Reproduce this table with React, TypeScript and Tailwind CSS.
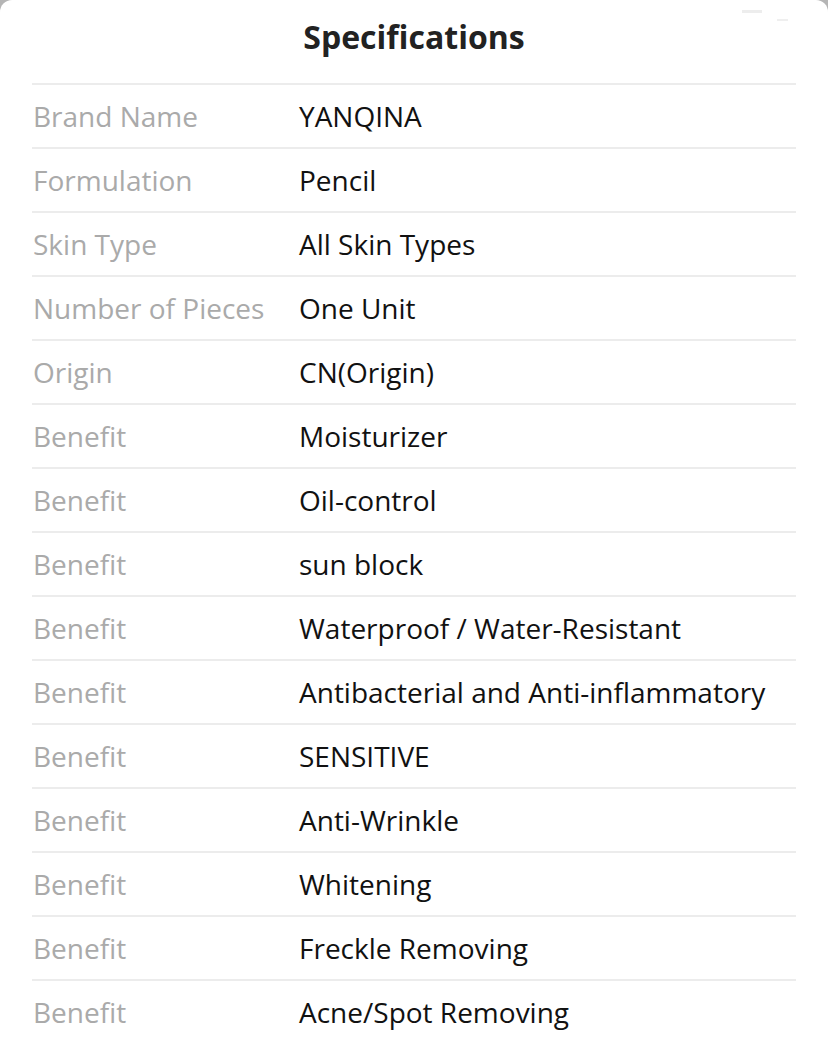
const specs: [string, string][] = [
  ["Brand Name", "YANQINA"],
  ["Formulation", "Pencil"],
  ["Skin Type", "All Skin Types"],
  ["Number of Pieces", "One Unit"],
  ["Origin", "CN(Origin)"],
  ["Benefit", "Moisturizer"],
  ["Benefit", "Oil-control"],
  ["Benefit", "sun block"],
  ["Benefit", "Waterproof / Water-Resistant"],
  ["Benefit", "Antibacterial and Anti-inflammatory"],
  ["Benefit", "SENSITIVE"],
  ["Benefit", "Anti-Wrinkle"],
  ["Benefit", "Whitening"],
  ["Benefit", "Freckle Removing"],
  ["Benefit", "Acne/Spot Removing"],
];

export default function App() {
  return (
    <div className="h-[1040px] w-[828px] overflow-hidden bg-[#b5b5b5] font-['Open_Sans',sans-serif]">
      <div className="relative h-full rounded-t-[12px] bg-white px-[32px]">
        <div className="absolute left-[742px] top-[10px] h-[3px] w-[20px] bg-[#ededed]" />
        <div className="absolute left-[777px] top-[19px] h-[2px] w-[11px] bg-[#efefef]" />
        <h1 className="flex h-[83px] items-center justify-center pb-[10px] text-[32px] font-bold text-[#222]">
          Specifications
        </h1>
        <div>
          {specs.map(([label, value], i) => (
            <div
              key={i}
              className="flex h-[64px] items-center border-t-2 border-[#ececec] text-[28px]"
            >
              <div className="w-[267px] pl-[1px] text-[#aaaaaa]">{label}</div>
              <div className="text-[#111]">{value}</div>
            </div>
          ))}
        </div>
      </div>
    </div>
  );
}
